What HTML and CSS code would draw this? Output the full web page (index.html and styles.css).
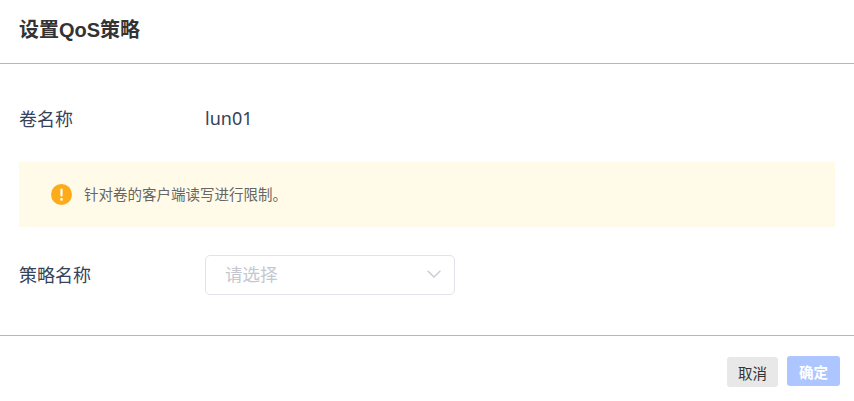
FILE: index.html
```html
<!DOCTYPE html>
<html lang="zh-CN">
<head>
    <meta charset="UTF-8">
    <title>设置QoS策略</title>
    <link rel="stylesheet" href="styles.css">
</head>
<body>
    <div class="dialog">
        <header class="dialog-header">
            <h1>设置QoS策略</h1>
        </header>
        <div class="dialog-body">
            <div class="form-row name-row">
                <span class="form-label">卷名称</span>
                <span class="form-value">lun01</span>
            </div>
            <div class="alert">
                <svg class="alert-icon" viewBox="0 0 21 21" width="21" height="21">
                    <circle cx="10.5" cy="10.5" r="10.5" fill="#fdab19"/>
                    <rect x="9.4" y="4.6" width="2.2" height="8" rx="1" fill="#fff"/>
                    <circle cx="10.5" cy="15.4" r="1.3" fill="#fff"/>
                </svg>
                <span class="alert-text">针对卷的客户端读写进行限制。</span>
            </div>
            <div class="form-row policy-row">
                <span class="form-label">策略名称</span>
                <div class="select">
                    <span class="placeholder">请选择</span>
                    <svg class="select-arrow" viewBox="0 0 14 8" width="14" height="8">
                        <path d="M0.6 0.8 L7 7 L13.4 0.8" fill="none" stroke="#c6cad3" stroke-width="1.3"/>
                    </svg>
                </div>
            </div>
        </div>
        <footer class="dialog-footer">
            <button class="btn btn-cancel">取消</button>
            <button class="btn btn-ok">确定</button>
        </footer>
    </div>
</body>
</html>
```

FILE: styles.css
```css
* {
    box-sizing: border-box;
}

body {
    margin: 0;
    background: #fff;
    font-family: "Noto Sans CJK SC", "Liberation Sans", sans-serif;
    color: #333;
}

.dialog {
    width: 854px;
    height: 401px;
    overflow: hidden;
}

/* HEADER */
.dialog-header {
    height: 64px;
    padding: 0 19px;
    display: flex;
    align-items: center;
    border-bottom: 1px solid #b4b8be;
}

.dialog-header h1 {
    margin: 0 0 7px;
    font-family: "Liberation Sans", "Noto Sans CJK SC", sans-serif;
    font-size: 20px;
    font-weight: bold;
    color: #333;
}

/* BODY */
.dialog-body {
    height: 271px;
    padding: 34px 19px 0;
}

.form-row {
    display: flex;
    align-items: center;
}

.name-row {
    height: 40px;
}

.form-label {
    width: 186px;
    font-size: 18px;
    color: #36425a;
}

.policy-row .form-label {
    padding-bottom: 3px;
}

.form-value {
    font-family: "Noto Sans", sans-serif;
    font-size: 18px;
    color: #36425a;
}

.alert {
    height: 65px;
    margin-top: 24px;
    padding-left: 32px;
    display: flex;
    align-items: center;
    gap: 12px;
    background: #fffbe8;
    font-size: 14.5px;
    color: #666;
}

.alert-text {
    padding-bottom: 2px;
}

.policy-row {
    margin-top: 28px;
}

.select {
    width: 250px;
    height: 40px;
    padding: 0 13px 3px 19px;
    display: flex;
    align-items: center;
    justify-content: space-between;
    border: 1px solid #e0e3ea;
    border-radius: 5px;
}

.placeholder {
    font-size: 17.5px;
    color: #c4c7d0;
}

/* FOOTER */
.dialog-footer {
    height: 66px;
    padding: 20px 14px 0 0;
    display: flex;
    justify-content: flex-end;
    align-items: flex-start;
    gap: 9px;
    border-top: 1px solid #b4b8be;
}

.btn {
    height: 30px;
    padding: 0;
    border: none;
    border-radius: 3px;
    font-family: "Noto Sans CJK SC", sans-serif;
    font-size: 14.5px;
}

.btn-cancel {
    width: 51px;
    margin-top: 1px;
    background: #e8e8e8;
    color: #333;
}

.btn-ok {
    width: 53px;
    background: #adc6ff;
    color: #fff;
    font-weight: bold;
}
```
